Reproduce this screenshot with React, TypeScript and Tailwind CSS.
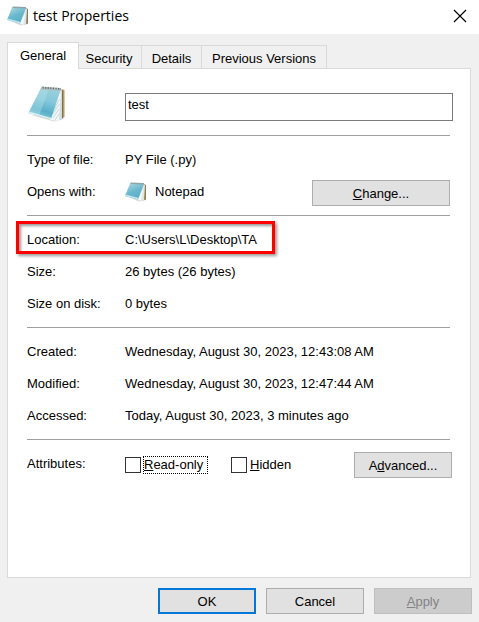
import { useId, type ReactNode } from "react";

function NotepadIcon() {
  const id = useId();
  return (
    <svg viewBox="0 0 38 37" className="ml-px h-[37px] w-[38px]" aria-hidden="true">
      <defs>
        <linearGradient id={id} x1="0.7" y1="0" x2="0.4" y2="1">
          <stop offset="0" stopColor="#9ad0de" />
          <stop offset="0.4" stopColor="#86c8da" />
          <stop offset="0.75" stopColor="#58afc8" />
          <stop offset="1" stopColor="#86c9da" />
        </linearGradient>
      </defs>
      <path d="M3 30 L26 36.5 L36 34 L33 31 Z" fill="#d9d9d6" />
      <path d="M33.5 4 L36.5 5 L36.5 32 L31 35 Z" fill="#b8995f" />
      <path d="M33.5 5 L35 6 L35 33 L32 34 Z" fill="#8a6d3c" />
      <path d="M32.5 4 L34 6 L34 34.5 L28 36.5 L28 20 Z" fill="#cfdde1" />
      <path d="M32 4 L33 5 L31 36 L22 35 L24 24 Z" fill="#f2f7f8" />
      <path d="M31.5 14 L26 25 M31.5 19 L25 29 M31 24 L25 33 M31 29 L27 35" stroke="#bcd0d6" strokeWidth="0.8" />
      <path d="M13 3 L33 4 L23 34 L0.5 28 Z" fill={`url(#${id})`} />
      <path d="M13 3 L21 4 L11 31 L0.5 28 Z" fill="#b9e3ec" opacity="0.4" />
      <path d="M0.5 28 L23 34.5 L23.5 33 L1.2 26.6 Z" fill="#d5eef3" />
      <path d="M13.5 1.5 L33 3 L33 6 L12.6 4.8 Z" fill="#b4bfc1" />
      <path d="M14.5 2.6 L33 4" stroke="#5f6c70" strokeWidth="1.8" strokeDasharray="1.2 1.4" />
    </svg>
  );
}

function SmallNotepadIcon() {
  const id = useId();
  return (
    <svg viewBox="0 0 22 20" className="h-5 w-[22px] shrink-0" aria-hidden="true">
      <defs>
        <linearGradient id={id} x1="0.2" y1="0" x2="0.7" y2="1">
          <stop offset="0" stopColor="#a9d6e1" />
          <stop offset="0.5" stopColor="#69b7cd" />
          <stop offset="1" stopColor="#5aaec6" />
        </linearGradient>
      </defs>
      <path d="M1 14 L14 19.5 L21 18 L19 15 Z" fill="#d4d6d5" />
      <path d="M19 2 L21 3 L21 17.5 L17 18.5 Z" fill="#8f7c55" />
      <path d="M18.5 2 L20 3 L19 18.5 L15 19.5 L12.5 17.5 Z" fill="#dce6e9" />
      <path d="M18.5 6 L16 18.5 L13 17.5 Z" fill="#f7fafb" />
      <path d="M5 1.5 L19 2 L13 17.5 L0 14 Z" fill={`url(#${id})`} />
      <path d="M0 14 L13 17.5 L13.5 16 L0.6 12.6 Z" fill="#c5e6ee" />
      <path d="M5.5 1.2 L19 1.7" stroke="#8fa3a8" strokeWidth="1.4" />
    </svg>
  );
}

function Section({ children }: { children: ReactNode }) {
  return <section className="border-t border-[#a0a0a0] pt-2 pb-[7px]">{children}</section>;
}

function Row({ label, children }: { label: string; children: ReactNode }) {
  return (
    <div className="relative flex h-8 items-center">
      <span className="w-[98px] shrink-0">{label}</span>
      {children}
    </div>
  );
}

const button = "h-[26px] border border-[#adadad] bg-[#e1e1e1] pt-px text-center";
const tab = "h-6 border border-l-0 border-[#d9d9d9] bg-[#f0f0f0] pt-[3px] whitespace-nowrap";
const checkbox = "size-4 shrink-0 appearance-none border border-[#333333] bg-white";

export default function App() {
  return (
    <div className="flex min-h-screen flex-col bg-[#f0f0f0] font-['Liberation_Sans',Arial,sans-serif] text-[13px] leading-4 text-black">
      <header className="flex h-[34px] items-center bg-white pr-3 pb-[3px] pl-[7px]">
        <SmallNotepadIcon />
        <h1 className="ml-1 flex-1 font-['Open_Sans','Noto_Sans',sans-serif] text-[14px] leading-5">test Properties</h1>
        <button aria-label="Close">
          <svg viewBox="0 0 14 14" className="size-[14px]" fill="none" stroke="#000" strokeWidth="1.2">
            <path d="M1 1 L13 13 M13 1 L1 13" />
          </svg>
        </button>
      </header>

      <main className="flex flex-1 flex-col pt-2 pr-2 pb-2 pl-[7px]">
        <div role="tablist" className="-mb-px flex items-end">
          <button role="tab" aria-selected="true" className="z-10 h-[27px] w-[72px] border border-b-0 border-[#d9d9d9] bg-white">
            General
          </button>
          <button role="tab" aria-selected="false" className={`${tab} w-[63px] pr-[2px]`}>Security</button>
          <button role="tab" aria-selected="false" className={`${tab} w-[60px]`}>Details</button>
          <button role="tab" aria-selected="false" className={`${tab} w-[125px]`}>Previous Versions</button>
        </div>

        <div role="tabpanel" className="flex-1 border border-[#d9d9d9] bg-white pt-4 pr-[18px] pl-[19px]">
          <div className="flex h-[50px] items-start">
            <NotepadIcon />
            <input
              aria-label="File name"
              defaultValue="test"
              className="mt-2 -mr-px ml-[59px] h-7 min-w-0 flex-1 border border-[#7a7a7a] bg-white px-[2px] pb-[5px] outline-none"
            />
          </div>

          <div className="mr-[2px]">
            <Section>
              <Row label="Type of file:">PY File (.py)</Row>
              <Row label="Opens with:">
                <SmallNotepadIcon />
                <span className="ml-2 flex-1">Notepad</span>
                <button className={`${button} mt-[2px] w-[138px]`}>
                  <u>C</u>hange...
                </button>
              </Row>
            </Section>
            <Section>
              <Row label="Location:">
                <span>C:\Users\L\Desktop\TA</span>
                <span className="absolute -top-[3px] -left-[11px] h-[33px] w-[259px] border-[3px] border-[#fe0000] shadow-[2px_2px_3px_rgba(0,0,0,0.4),inset_2px_2px_3px_rgba(0,0,0,0.4)]" />
              </Row>
              <Row label="Size:">26 bytes (26 bytes)</Row>
              <Row label="Size on disk:">0 bytes</Row>
            </Section>
            <Section>
              <Row label="Created:">Wednesday, August 30, 2023, 12:43:08 AM</Row>
              <Row label="Modified:">Wednesday, August 30, 2023, 12:47:44 AM</Row>
              <Row label="Accessed:">Today, August 30, 2023, 3 minutes ago</Row>
            </Section>
            <Section>
              <Row label="Attributes:">
                <div className="-mr-[2px] flex flex-1 items-center pt-[2px]">
                  <input id="readonly" type="checkbox" className={checkbox} />
                  <label htmlFor="readonly" className="ml-[2px] w-[65px] border border-dotted border-black whitespace-nowrap">
                    <u>R</u>ead-only
                  </label>
                  <input id="hidden" type="checkbox" className={`${checkbox} ml-[23px]`} />
                  <label htmlFor="hidden" className="ml-[3px] flex-1">
                    <u>H</u>idden
                  </label>
                  <button className={`${button} w-[98px]`}>
                    A<u>d</u>vanced...
                  </button>
                </div>
              </Row>
            </Section>
          </div>
        </div>

        <footer className="-mr-px flex justify-end gap-[10px] pt-[10px]">
          <button className="h-[26px] w-[98px] border-2 border-[#0078d7] bg-[#e1e1e1] pt-px">OK</button>
          <button className={`${button} w-[98px]`}>Cancel</button>
          <button disabled className="h-[26px] w-[98px] border border-[#bfbfbf] bg-[#cccccc] pt-px text-[#838383]">
            <u>A</u>pply
          </button>
        </footer>
      </main>
    </div>
  );
}
